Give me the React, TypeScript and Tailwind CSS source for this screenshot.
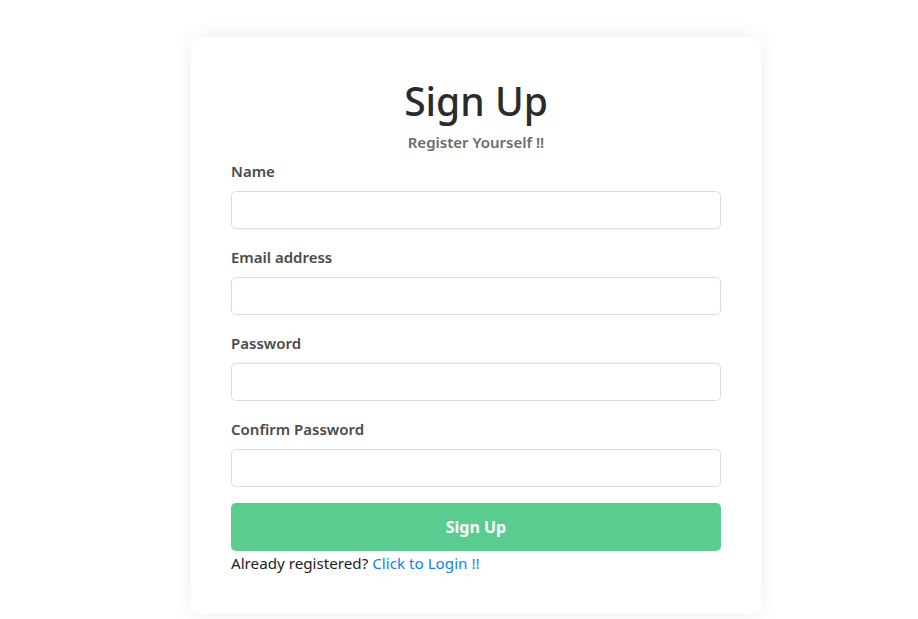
import React from 'react';

const fields = ['Name', 'Email address', 'Password', 'Confirm Password'];

export default function App() {
  return (
    <div
      className="min-h-screen bg-white flex justify-center pl-[34px] pt-[37px]"
      style={{ fontFamily: '"Noto Sans", "Open Sans", sans-serif' }}
    >
      <div className="w-[570px] h-[577px] rounded-[10px] bg-white px-10 pt-10 shadow-[0_0_20px_rgba(0,0,0,0.08)]">
        <h1 className="text-center text-[39px] leading-[48px] font-medium text-[#2b2b2b]">Sign Up</h1>
        <p className="mt-2 text-center text-[15px] leading-[18px] font-semibold text-[#6c6c6c]">Register Yourself !!</p>
        <form className="mt-2" onSubmit={(e) => e.preventDefault()}>
          {fields.map((f) => (
            <div key={f} className="mb-4">
              <label className="block text-[15px] leading-6 font-semibold text-[#4a4a4a] mb-2">{f}</label>
              <input
                type={f.includes('Password') ? 'password' : 'text'}
                className="block w-full h-[38px] rounded-[5px] border border-[#dcdcdc] bg-white px-3 outline-none"
              />
            </div>
          ))}
          <button className="w-full h-12 rounded-[5px] bg-[#5acc8f] text-white text-[16px] font-bold">Sign Up</button>
          <p className="text-[15.2px] leading-6 text-[#222]">
            Already registered? <a href="#" className="text-[#0d7ffd]">Click to Login !!</a>
          </p>
        </form>
      </div>
    </div>
  );
}
